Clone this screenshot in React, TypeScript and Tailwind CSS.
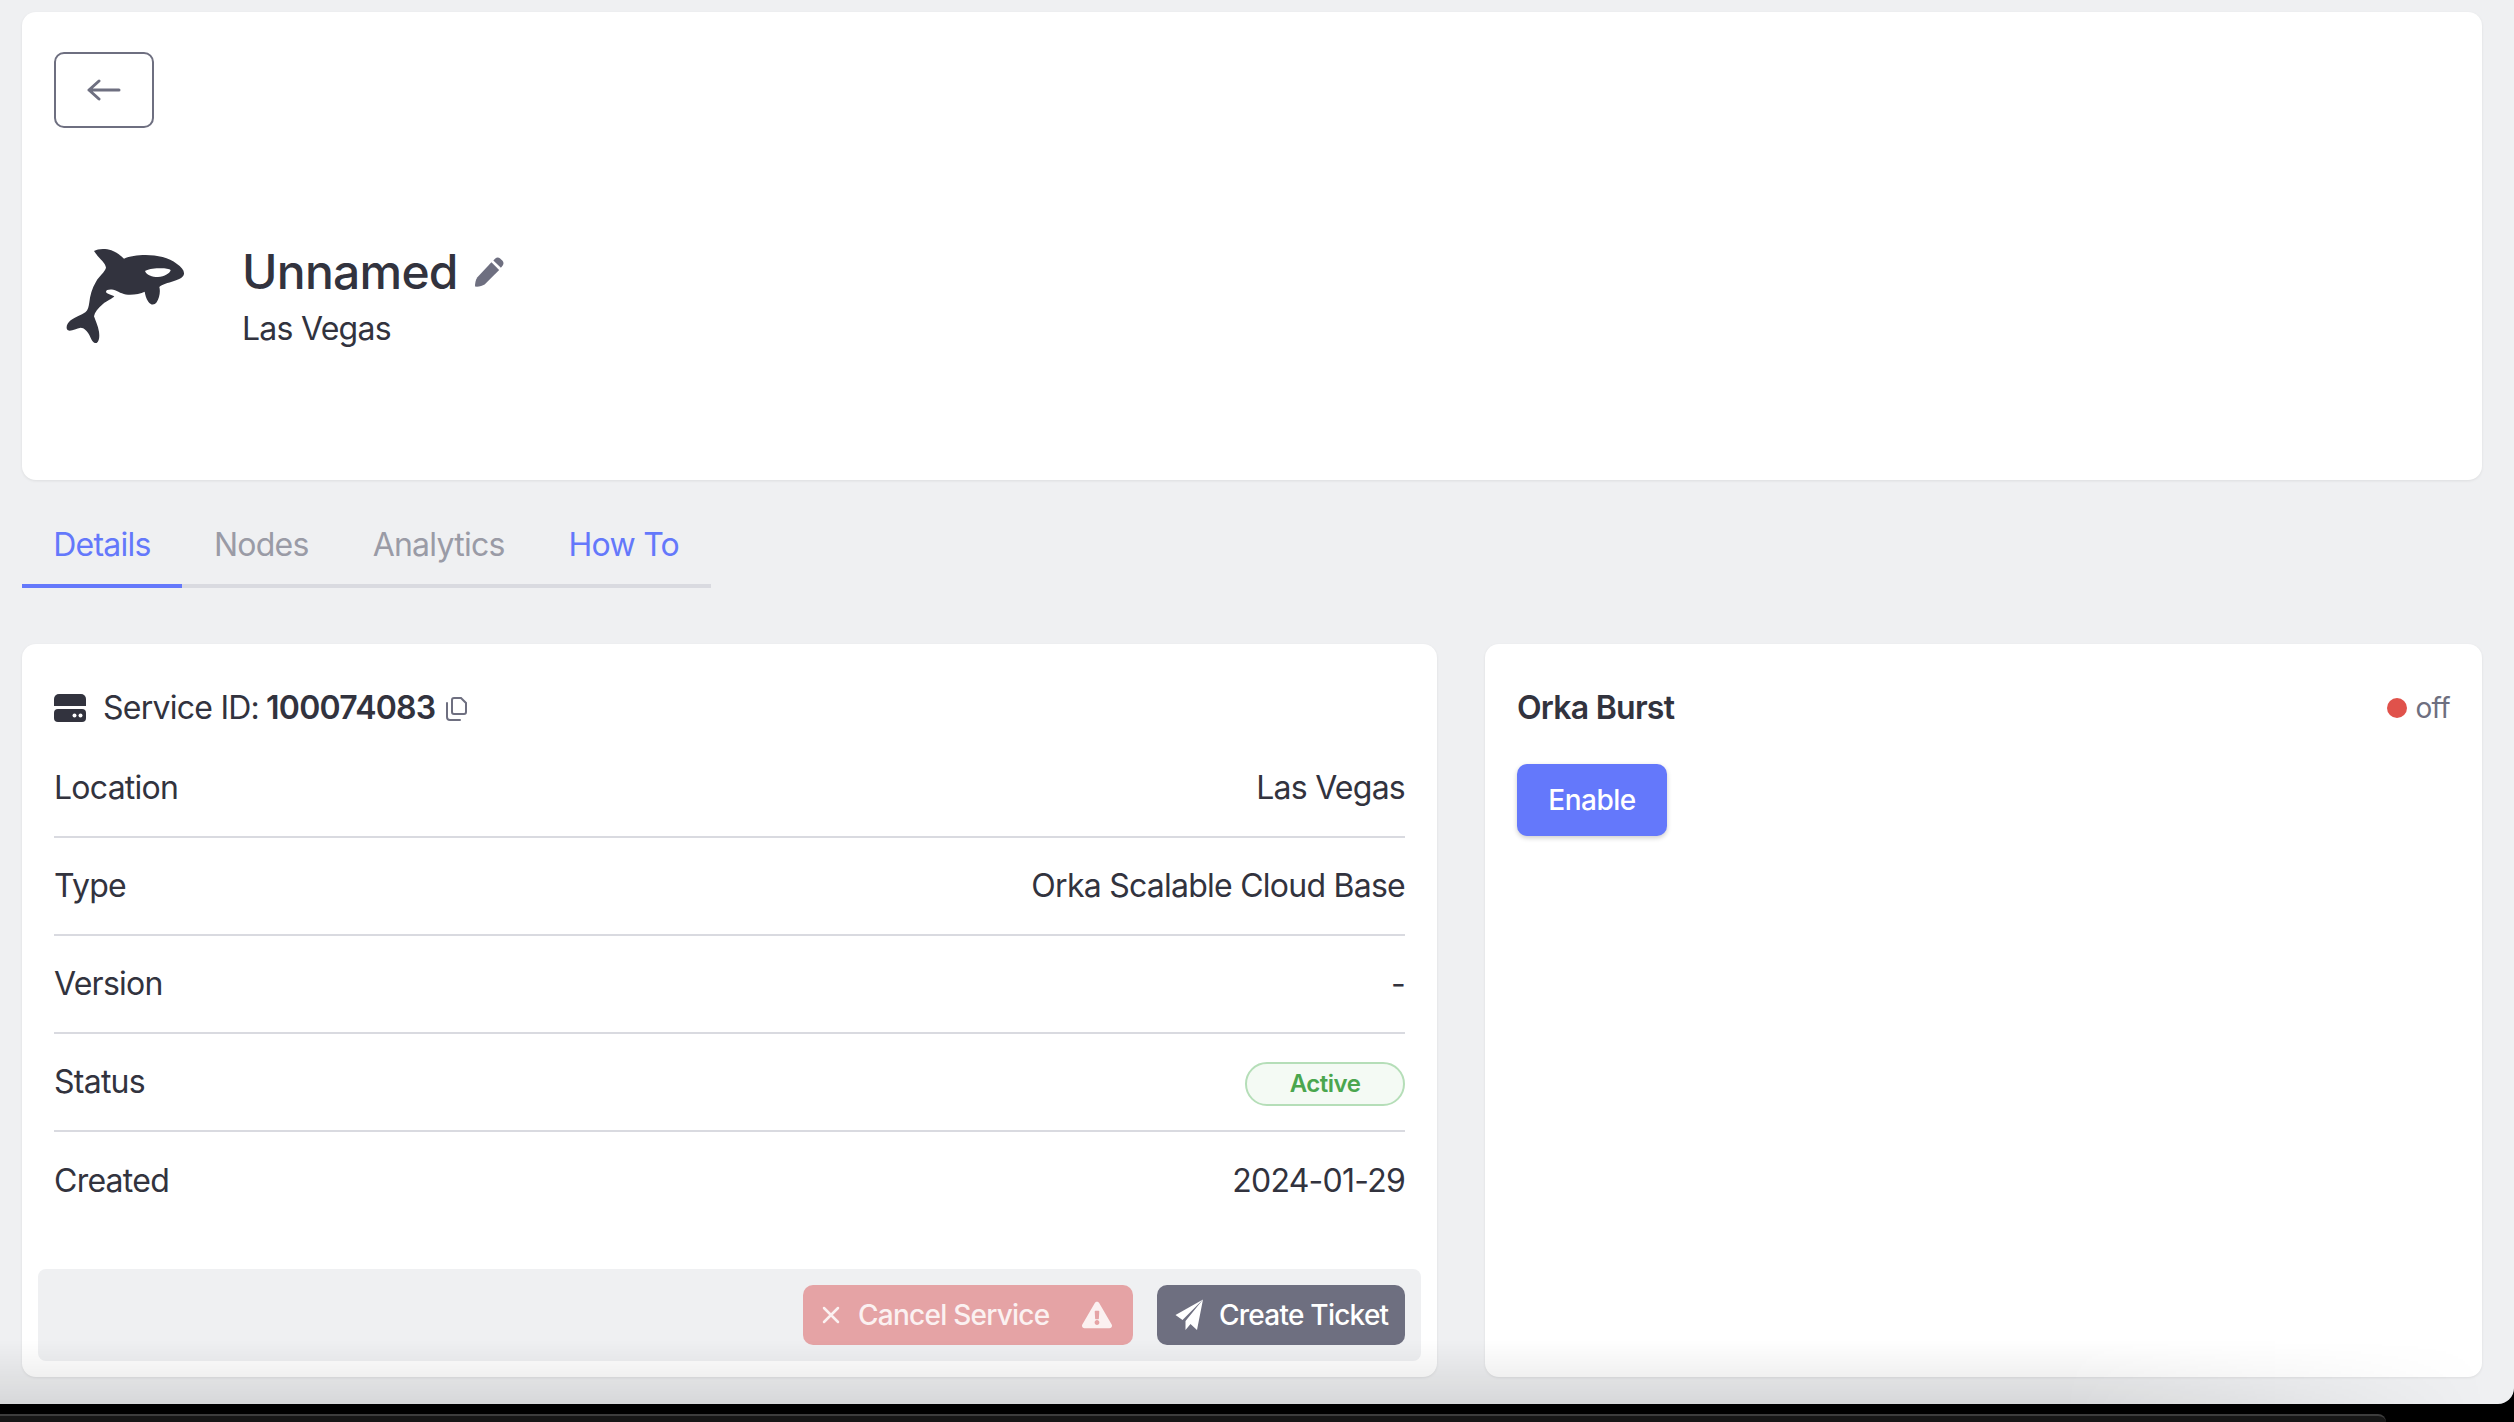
import { FaExclamationTriangle } from "react-icons/fa";

const rows = [
  { label: "Location", value: "Las Vegas" },
  { label: "Type", value: "Orka Scalable Cloud Base" },
  { label: "Version", value: "-" },
  { label: "Status", value: "Active" },
  { label: "Created", value: "2024-01-29" },
];

function Orca() {
  return (
    <svg width="124" height="98" viewBox="70 80 372 294" className="mb-[2px] shrink-0">
      <path
        fill="#32333e"
        fillRule="evenodd"
        d="M160 92C172 84 196 84 212 90C228 96 240 106 250 115C266 108 290 104 315 104C350 104 385 112 408 130C422 140 431 150 430 160C429 170 418 176 400 182C382 188 364 192 356 200C360 214 356 234 348 246C340 256 330 254 323 244C316 234 314 224 312 214C300 220 280 224 262 223C244 222 232 212 218 208C206 206 196 208 196 214C198 222 212 222 221 228C214 236 200 240 186 252C172 264 162 276 160 288C164 300 172 316 175 334C177 350 176 362 168 368C158 370 152 358 146 344C140 332 130 322 120 322C106 324 92 334 82 330C74 324 78 310 90 300C104 290 122 284 134 276C142 270 144 260 146 246C148 226 154 204 166 184C176 166 192 156 196 142C194 126 172 112 160 92ZM313 152C322 146 344 142 366 144C378 145 390 147 390 150C388 158 372 170 352 170C334 170 318 164 313 152Z"
      />
    </svg>
  );
}

function Pencil() {
  return (
    <svg width="30" height="30" viewBox="9 9 31 31" className="shrink-0">
      <path
        fill="#6e6f80"
        d="M10 39.5C10 36 10.8 32.5 12.5 30L27 14.5L35 22.5L20 37.5C17.5 39 13.5 40 10 39.5Z"
      />
      <path
        fill="#6e6f80"
        d="M29 12.5L31 10.5C32.5 9.2 34.5 9.2 36 10.5L38.5 13C39.8 14.5 39.8 16.5 38.5 18L36.8 20Z"
      />
    </svg>
  );
}

function Drive() {
  return (
    <svg width="32" height="28" viewBox="0 0 32 28" className="shrink-0">
      <path fill="#32333e" d="M0 12V5a5 5 0 0 1 5-5h22a5 5 0 0 1 5 5v7Z" />
      <rect y="15" width="32" height="13" rx="4" fill="#32333e" />
      <circle cx="20.5" cy="21.5" r="2" fill="#fff" />
      <circle cx="26.5" cy="21.5" r="2" fill="#fff" />
    </svg>
  );
}

function CopyIcon() {
  return (
    <svg width="22" height="25" viewBox="10 9 22 25" fill="none" stroke="#6e6f80" strokeWidth="2" className="shrink-0">
      <path d="M17 13a2 2 0 0 1 2-2h7l5 5v9a2 2 0 0 1-2 2H19a2 2 0 0 1-2-2Z" />
      <path d="M12 16v14a3 3 0 0 0 3 3h10" strokeLinecap="round" />
    </svg>
  );
}

function Plane() {
  return (
    <svg width="29" height="32" viewBox="10 10 29 32" fill="#fff" className="shrink-0">
      <path d="M38 10.5L10.5 26L17.5 31L29 19.5Z" />
      <path d="M38 10.5L20.5 32L20.5 41L25.5 35L32 41Z" />
    </svg>
  );
}

export default function App() {
  return (
    <div className="relative flex h-screen w-full flex-col overflow-hidden bg-black font-['Inter',sans-serif] tracking-[-0.75px] text-[#32333e]">
      <main className="flex min-h-0 flex-1 flex-col rounded-br-[16px] bg-[#eff0f2] pb-[27px] pl-[22px] pr-[32px] pt-[12px]">
        <section className="h-[468px] shrink-0 rounded-[14px] bg-white pl-[32px] pt-[40px] shadow-[0_1px_3px_rgba(0,0,0,0.08)]">
          <button className="flex h-[76px] w-[100px] items-center justify-center rounded-[10px] border-2 border-[#6e6f80]">
            <svg width="34" height="22" viewBox="0 0 34 22" fill="none" stroke="#6e6f80" strokeWidth="3" strokeLinecap="round" strokeLinejoin="round">
              <path d="M2 11H32M12 2L2 11L12 20" />
            </svg>
          </button>
          <div className="mt-[117px] flex items-center pl-[10px]">
            <Orca />
            <div className="ml-[54px]">
              <div className="flex items-center gap-[16px]">
                <h1 className="text-[48px] font-medium leading-[54px]">Unnamed</h1>
                <Pencil />
              </div>
              <p className="mt-[11px] text-[32px] leading-[38px]">Las Vegas</p>
            </div>
          </div>
        </section>

        <nav className="mt-[28px] flex w-[689px] shrink-0 whitespace-nowrap border-b-4 border-[#d9dae0] text-[32px]">
          <a className="-mb-[4px] flex h-[80px] w-[162px] items-center justify-center border-b-4 border-[#6478fb] pb-[3px] text-[#6478fb]">Details</a>
          <a className="flex h-[76px] items-center px-[32px] pb-[3px] text-[#9a9ba6]">Nodes</a>
          <a className="flex h-[76px] items-center px-[32px] pb-[3px] text-[#9a9ba6]">Analytics</a>
          <a className="flex h-[76px] items-center px-[32px] pb-[3px] text-[#6478fb]">How To</a>
        </nav>

        <div className="mt-[56px] grid min-h-0 flex-1 grid-cols-[1415px_997px] gap-[48px]">
          <section className="flex flex-col rounded-[14px] bg-white pt-[32px] shadow-[0_1px_3px_rgba(0,0,0,0.08)]">
            <div className="flex h-[64px] shrink-0 items-center px-[32px] text-[32px]">
              <Drive />
              <span className="ml-[17px]">Service ID:</span>
              <span className="ml-[7px] font-semibold">100074083</span>
              <span className="ml-[10px]">
                <CopyIcon />
              </span>
            </div>
            <div className="px-[32px]">
              {rows.map((row, i) => (
                <div
                  key={row.label}
                  className={
                    i < rows.length - 1
                      ? "flex h-[98px] items-center justify-between border-b-2 border-[#d9dae0] text-[32px]"
                      : "flex h-[98px] items-center justify-between text-[32px]"
                  }
                >
                  <span>{row.label}</span>
                  {row.label === "Status" ? (
                    <span className="mt-[3px] flex h-[44px] w-[160px] items-center justify-center rounded-full border-2 border-[#b5deb8] bg-[#f4faf4] text-[24px] font-semibold tracking-[-0.5px] text-[#4aa64e]">
                      {row.value}
                    </span>
                  ) : (
                    <span>{row.value}</span>
                  )}
                </div>
              ))}
            </div>
            <div className="mx-[16px] mb-[16px] mt-auto flex h-[92px] items-center justify-end gap-[24px] rounded-[8px] bg-[#eff0f2] pr-[16px]">
              <button className="flex h-[60px] w-[330px] items-center rounded-[10px] bg-[#e5a3a5] pl-[19px] pr-[21px] text-[28px] font-medium text-[#fbf1f1]">
                <svg width="18" height="18" viewBox="0 0 18 18" stroke="#fbf1f1" strokeWidth="2.5" strokeLinecap="round" className="shrink-0">
                  <path d="M2 2L16 16M16 2L2 16" />
                </svg>
                <span className="ml-[18px]">Cancel Service</span>
                <FaExclamationTriangle className="ml-auto h-[28px] w-[30px]" />
              </button>
              <button className="flex h-[60px] w-[248px] items-center rounded-[10px] bg-[#6e6f80] pl-[18px] text-[28px] font-medium text-white">
                <Plane />
                <span className="ml-[15px]">Create Ticket</span>
              </button>
            </div>
          </section>

          <section className="rounded-[14px] bg-white px-[32px] pt-[32px] shadow-[0_1px_3px_rgba(0,0,0,0.08)]">
            <div className="flex h-[64px] items-center justify-between">
              <h2 className="text-[32px] font-semibold">Orka Burst</h2>
              <div className="flex items-center gap-[8px] text-[28px] tracking-[-0.6px] text-[#6e6f80]">
                <span className="h-[20px] w-[20px] rounded-full bg-[#e0524b]" />
                off
              </div>
            </div>
            <button className="mt-[24px] h-[72px] w-[150px] rounded-[10px] bg-[#6478fb] text-[28px] font-medium tracking-[-0.5px] text-white shadow-[0_2px_5px_rgba(0,0,0,0.2)]">
              Enable
            </button>
          </section>
        </div>
      </main>

      <div className="flex h-[18px] shrink-0 flex-col bg-black pt-[10px]">
        <div className="w-[2386px] flex-1 rounded-tr-[20px] border-t-2 border-[#3d3d3d] bg-[#171717]" />
      </div>

      <div className="pointer-events-none absolute inset-x-0 bottom-[18px] h-[64px] bg-gradient-to-b from-transparent to-black/10 [mask-image:linear-gradient(to_right,black_82%,transparent_99%)]" />
    </div>
  );
}
